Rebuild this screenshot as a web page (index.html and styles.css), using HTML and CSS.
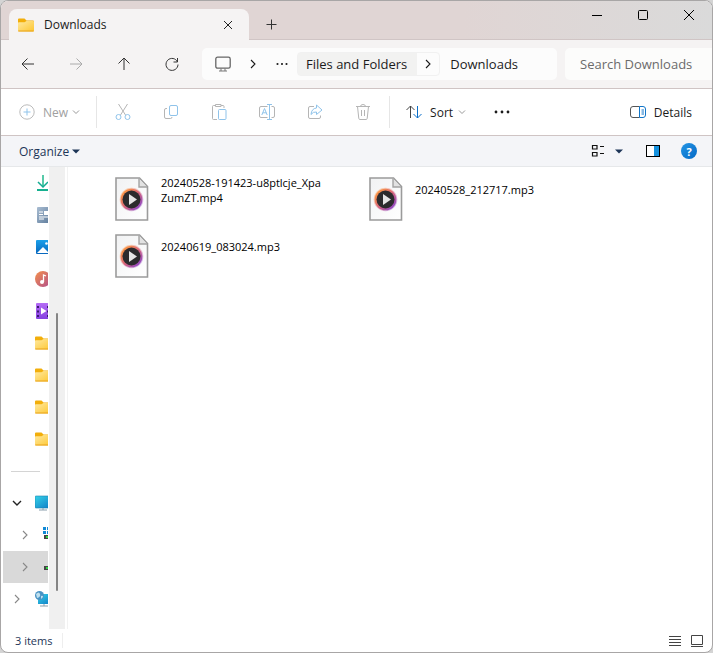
FILE: index.html
```html
<!DOCTYPE html>
<html lang="en">
<head>
    <meta charset="UTF-8">
    <meta name="viewport" content="width=device-width, initial-scale=1.0">
    <title>Downloads</title>
    <link rel="stylesheet" href="styles.css">
</head>
<body>
    <svg class="defs" aria-hidden="true">
        <defs>
            <linearGradient id="folderFill" x1="0" y1="0" x2="1" y2="1">
                <stop offset="0" stop-color="#ffe9a0"/>
                <stop offset="1" stop-color="#fdc62f"/>
            </linearGradient>
            <linearGradient id="screenFill" x1="0" y1="0" x2="1" y2="1">
                <stop offset="0" stop-color="#35d3e8"/>
                <stop offset="1" stop-color="#0f78c4"/>
            </linearGradient>
            <linearGradient id="ringFill" x1="0" y1="0" x2="1" y2="1">
                <stop offset="0.1" stop-color="#ff9a3c"/>
                <stop offset="0.5" stop-color="#d9657a"/>
                <stop offset="0.9" stop-color="#8a45c8"/>
            </linearGradient>
            <linearGradient id="sheetFill" x1="0" y1="0" x2="1" y2="1">
                <stop offset="0" stop-color="#f1f2f3"/>
                <stop offset="1" stop-color="#ffffff"/>
            </linearGradient>
            <linearGradient id="docFill" x1="0" y1="0" x2="1" y2="1">
                <stop offset="0" stop-color="#a9bdd2"/>
                <stop offset="1" stop-color="#5f7c9c"/>
            </linearGradient>
            <linearGradient id="picFill" x1="0" y1="0" x2="0" y2="1">
                <stop offset="0" stop-color="#1ba0ea"/>
                <stop offset="1" stop-color="#0666bd"/>
            </linearGradient>
            <linearGradient id="musicFill" x1="0" y1="0" x2="1" y2="1">
                <stop offset="0.1" stop-color="#ee8a52"/>
                <stop offset="1" stop-color="#b04d8d"/>
            </linearGradient>
            <linearGradient id="videoFill" x1="0" y1="0" x2="0" y2="1">
                <stop offset="0" stop-color="#b56cf5"/>
                <stop offset="1" stop-color="#8540e0"/>
            </linearGradient>
        </defs>
        <symbol id="folder" viewBox="0 0 16 14">
            <path d="M0 1.5Q0 .5 1 .5H6.500L8.500 2.500H15Q16 2.500 16 3.500V8H0Z" fill="#f2ae0a"/>
            <path d="M0 5Q0 4.300 .8 4.300H6.500L8.500 3H15.200Q16 3 16 3.800V12.500Q16 13.500 15 13.500H1Q0 13.500 0 12.500Z" fill="url(#folderFill)"/>
            <path d="M.3 13H15.700" stroke="#e8a21c"/>
        </symbol>
        <symbol id="media" viewBox="0 0 34 44">
            <path d="M1 1H24.500L32.500 9.500V43H1Z" fill="url(#sheetFill)" stroke="#9b9b9b" stroke-width="1.600"/>
            <path d="M24 1.500V10H32" fill="#e2e2e2" stroke="#a3a3a3" stroke-width="1.400"/>
            <circle cx="16.500" cy="22.500" r="11.800" fill="url(#ringFill)" opacity=".4"/>
            <circle cx="16.500" cy="22.500" r="10.800" fill="url(#ringFill)"/>
            <circle cx="16.500" cy="22.500" r="9" fill="#2c2b2d"/>
            <path d="M14 17L22 22.500L14 28Z" fill="#e6e6e6"/>
        </symbol>
        <symbol id="down" viewBox="0 0 8 8">
            <path d="M1 2.500L4 5.500L7 2.500" fill="none" stroke="currentColor"/>
        </symbol>
        <symbol id="right" viewBox="0 0 10 10">
            <path d="M3 1L7 5L3 9" fill="none" stroke="currentColor" stroke-width="1.100"/>
        </symbol>
        <symbol id="dots" viewBox="0 0 16 4">
            <circle cx="2" cy="2" r="1.400" fill="currentColor"/>
            <circle cx="8" cy="2" r="1.400" fill="currentColor"/>
            <circle cx="14" cy="2" r="1.400" fill="currentColor"/>
        </symbol>
    </svg>

    <div class="window">
        <header class="titlebar">
            <div class="tab">
                <svg class="icon16" aria-hidden="true"><use href="#folder"/></svg>
                <span class="tab-title">Downloads</span>
                <button class="tab-close" aria-label="Close tab">
                    <svg width="10" height="10" viewBox="0 0 10 10"><path d="M1 1L9 9M9 1L1 9" stroke="#222"/></svg>
                </button>
            </div>
            <button class="new-tab" aria-label="New tab">
                <svg width="12" height="12" viewBox="0 0 12 12"><path d="M5.500 .5V10.500M.5 5.500H10.500" stroke="#333"/></svg>
            </button>
            <div class="caption">
                <button aria-label="Minimize"><svg width="12" height="12" viewBox="0 0 12 12"><path d="M1 6.500H11" stroke="#000"/></svg></button>
                <button aria-label="Maximize"><svg width="12" height="12" viewBox="0 0 12 12"><rect x="1.500" y="1.500" width="9" height="9" rx="1" fill="none" stroke="#000"/></svg></button>
                <button aria-label="Close"><svg width="12" height="12" viewBox="0 0 12 12"><path d="M1 1L11 11M11 1L1 11" stroke="#000"/></svg></button>
            </div>
        </header>

        <nav class="navbar">
            <div class="nav-buttons">
                <button aria-label="Back"><svg width="14" height="14" viewBox="0 0 14 14"><path d="M13 7H1.500M6.500 1.500L1 7L6.500 12.500" /></svg></button>
                <button aria-label="Forward" disabled><svg width="14" height="14" viewBox="0 0 14 14"><path d="M1 7H12.500M7.500 1.500L13 7L7.500 12.500" /></svg></button>
                <button aria-label="Up"><svg width="14" height="14" viewBox="0 0 14 14"><path d="M7 13V1.500M1.500 6.500L7 1L12.500 6.500" /></svg></button>
                <button aria-label="Refresh"><svg width="14" height="14" viewBox="0 0 14 14"><path d="M12.500 5A6 6 0 1 0 13 7.500M12.500 1V5H8.500" /></svg></button>
            </div>
            <div class="address">
                <button class="root" aria-label="This PC">
                    <svg width="16" height="16" viewBox="0 0 16 16"><rect x=".8" y="1.200" width="14.400" height="11" rx="1.800" fill="none" stroke="#666" stroke-width="1.300"/><path d="M6 12.500V15M10 12.500V15M4 15H12" stroke="#777"/></svg>
                </button>
                <svg class="sep" aria-hidden="true"><use href="#right"/></svg>
                <button class="more" aria-label="More locations"><svg width="12" height="4"><use href="#dots"/></svg></button>
                <div class="crumb-split">
                    <button class="crumb">Files and Folders</button>
                    <button class="crumb-menu" aria-label="Subfolders"><svg class="sep"><use href="#right"/></svg></button>
                </div>
                <button class="crumb-current">Downloads</button>
            </div>
            <input class="search" type="text" placeholder="Search Downloads" aria-label="Search Downloads">
        </nav>

        <div class="commands">
            <button class="new" disabled>
                <svg width="16" height="16" viewBox="0 0 16 16"><circle cx="8" cy="8" r="7.200" stroke="#bbb"/><path d="M8 4.500V11.500M4.500 8H11.500" stroke="#8fc3ea"/></svg>
                <span>New</span>
                <svg class="caret"><use href="#down"/></svg>
            </button>
            <div class="command-group">
                <button aria-label="Cut" disabled><svg width="18" height="18" viewBox="0 0 18 18"><path d="M4.500 1L11.500 12M13.500 1L6.500 12" stroke="#b5b5b5"/><circle cx="4.500" cy="14" r="2.500" stroke="#8fc3ea"/><circle cx="13.500" cy="14" r="2.500" stroke="#8fc3ea"/></svg></button>
                <button aria-label="Copy" disabled><svg width="18" height="18" viewBox="0 0 18 18"><path d="M5 5.500H4Q2.500 5.500 2.500 7V14Q2.500 15.500 4 15.500H8.500Q10 15.500 10 14" stroke="#b5b5b5"/><rect x="7.500" y="2.500" width="8" height="10" rx="1.500" stroke="#8fc3ea"/></svg></button>
                <button aria-label="Paste" disabled><svg width="18" height="18" viewBox="0 0 18 18"><path d="M7 16.500H3.500Q2.500 16.500 2.500 15.500V3.500Q2.500 2.500 3.500 2.500H5.500M11 2.500H13Q14 2.500 14 3.500V5M5.500 1.500H11V3.500H5.500Z" stroke="#b5b5b5"/><rect x="8.500" y="6.500" width="7.500" height="10" rx="1" stroke="#8fc3ea"/></svg></button>
                <button aria-label="Rename" disabled><svg width="18" height="18" viewBox="0 0 18 18"><path d="M9.500 3.500H3Q1.500 3.500 1.500 5V13Q1.500 14.500 3 14.500H9.500M13.500 3.500H15Q16.500 3.500 16.500 5V13Q16.500 14.500 15 14.500H13.500" stroke="#b5b5b5"/><path d="M9 1.500H14M11.500 1.500V16.500M9 16.500H14M3.800 12L6.500 5.500L9.200 12M4.800 9.800H8.200" stroke="#8fc3ea"/></svg></button>
                <button aria-label="Share" disabled><svg width="18" height="18" viewBox="0 0 18 18"><path d="M8 3.500H4Q2.500 3.500 2.500 5V14Q2.500 15.500 4 15.500H13Q14.500 15.500 14.500 14V12.500" stroke="#b5b5b5"/><path d="M10.500 2L16 7L10.500 11.500V9Q7 8.500 5 11.500Q5.500 5.500 10.500 5Z" stroke="#8fc3ea" stroke-linejoin="round"/></svg></button>
                <button aria-label="Delete" disabled><svg width="18" height="18" viewBox="0 0 18 18"><path d="M2 3.500H16M6.500 3.500Q6.500 1.500 9 1.500Q11.500 1.500 11.500 3.500M3.500 3.500L4.800 15.500Q5 16.500 6 16.500H12Q13 16.500 13.200 15.500L14.500 3.500M7.500 7V13M10.500 7V13" stroke="#b5b5b5"/></svg></button>
            </div>
            <button class="sort">
                <svg width="16" height="16" viewBox="0 0 16 16"><path d="M4.500 14V2M.5 6L4.500 2L8.500 6" stroke="#444"/><path d="M11.500 2V14M7.500 10L11.500 14L15.500 10" stroke="#0a6fc9"/></svg>
                <span>Sort</span>
                <svg class="caret"><use href="#down"/></svg>
            </button>
            <button class="overflow" aria-label="See more"><svg width="16" height="4"><use href="#dots"/></svg></button>
            <button class="details">
                <svg width="16" height="14" viewBox="0 0 16 14"><path d="M9.500 1.500H3Q.5 1.500 .5 4V10Q.5 12.500 3 12.500H9.500" stroke="#555"/><path d="M9.500 1.500H13Q15.500 1.500 15.500 4V10Q15.500 12.500 13 12.500H9.500ZM11.500 5H14M11.500 7H14M11.500 9H14" stroke="#1075c8"/></svg>
                <span>Details</span>
            </button>
        </div>

        <div class="organize-bar">
            <button class="organize">Organize <svg width="8" height="5" viewBox="0 0 8 5"><path d="M0 .5H8L4 4.500Z" fill="#1d3557"/></svg></button>
            <div class="view-tools">
                <button aria-label="Change view"><svg width="14" height="14" viewBox="0 0 14 14"><path d="M1.500 1.500H6V5H1.500ZM1.500 8.500H6V12H1.500ZM9 2.500H13M9 9.500H13" fill="none" stroke="#111" stroke-width="1.200"/></svg></button>
                <button class="view-menu" aria-label="View options"><svg width="8" height="5" viewBox="0 0 8 5"><path d="M0 .5H8L4 4.500Z" fill="#1d3557"/></svg></button>
                <button class="preview" aria-label="Preview pane"><svg width="14" height="12" viewBox="0 0 14 12"><rect x=".5" y=".5" width="13" height="11" fill="#fff"/><rect x="8" y="1" width="5" height="10" fill="#1592df"/><rect x=".5" y=".5" width="13" height="11" fill="none" stroke="#000"/></svg></button>
                <button class="help" aria-label="Help">?</button>
            </div>
        </div>

        <main class="content">
            <aside class="sidebar">
                <ul class="tree">
                    <li><svg class="glyph" viewBox="0 0 16 16"><path d="M8 0V12" stroke="#20b98c" stroke-width="1.500"/><path d="M3 7L8 12L13 7" fill="none" stroke="#12ab92" stroke-width="1.500"/><path d="M2 15H14" stroke="#16b08f" stroke-width="2"/></svg></li>
                    <li><svg class="glyph" viewBox="0 0 16 16"><rect x="2" width="13" height="16" rx="1" fill="url(#docFill)"/><path d="M4 5H8M4 7.500H8M4 10H13M4 12H9" stroke="#fff"/><rect x="9" y="4" width="4" height="4" fill="#fff"/></svg></li>
                    <li><svg class="glyph" viewBox="0 0 16 16"><rect x="1" y="1" width="15" height="14" rx="1" fill="url(#picFill)"/><path d="M2 14L8 8L14 14Z" fill="#fff"/><circle cx="11.500" cy="4.500" r="1.300" fill="#fff"/></svg></li>
                    <li><svg class="glyph" viewBox="0 0 16 16"><circle cx="8" cy="8" r="8" fill="url(#musicFill)"/><circle cx="7" cy="11" r="2" fill="#fff"/><path d="M8.500 11V4L11 5" fill="none" stroke="#fff" stroke-width="1.300"/></svg></li>
                    <li><svg class="glyph" viewBox="0 0 16 16"><rect x="1" width="15" height="16" rx="1" fill="url(#videoFill)"/><path d="M3 3V14M13 3V14" stroke="#3b1a70" stroke-width="2" stroke-dasharray="2 2.500"/><path d="M6 4.500L11.500 8L6 11.500Z" fill="#fff"/></svg></li>
                    <li><svg class="glyph"><use href="#folder"/></svg></li>
                    <li><svg class="glyph"><use href="#folder"/></svg></li>
                    <li><svg class="glyph"><use href="#folder"/></svg></li>
                    <li><svg class="glyph"><use href="#folder"/></svg></li>
                    <li class="divider"><hr></li>
                    <li class="branch open">
                        <svg class="arrow" viewBox="0 0 10 10"><path d="M1 3L5 7L9 3" fill="none" stroke="#222" stroke-width="1.400"/></svg>
                        <svg class="glyph" viewBox="0 0 16 16"><rect y="1" width="17" height="12" rx="1" fill="url(#screenFill)" stroke="#1b7fae" stroke-width=".6"/><path d="M4 15H12M8 13V15" stroke="#8ba0ad"/></svg>
                    </li>
                    <li class="branch child">
                        <svg class="arrow"><use href="#right"/></svg>
                        <svg class="glyph" viewBox="0 0 16 16"><path d="M0 0H3V3H0ZM4 0H7V3H4ZM0 4H3V7H0ZM4 4H7V7H4Z" fill="#1189d6"/><rect x="1" y="8" width="14" height="4" fill="#444"/><rect x="3" y="9" width="2" height="2" fill="#31d843"/></svg>
                    </li>
                    <li class="branch child selected">
                        <svg class="arrow"><use href="#right"/></svg>
                        <svg class="glyph" viewBox="0 0 16 16"><rect x="1" y="7" width="14" height="4" fill="#444"/><rect x="3" y="8" width="2" height="2" fill="#31d843"/></svg>
                    </li>
                    <li class="branch">
                        <svg class="arrow"><use href="#right"/></svg>
                        <svg class="glyph" viewBox="0 0 16 16"><rect x="3" y="3" width="14" height="10" fill="url(#screenFill)"/><path d="M5 15H13M9 13V15" stroke="#8ba0ad"/><circle cx="4.500" cy="4.500" r="4.500" fill="#4a93c4"/><path d="M1 3Q4 0 5 3T2 7ZM6 5Q8 4 8 6L6 8Z" fill="#bfe0ef"/></svg>
                    </li>
                </ul>
                <div class="scrollbar"><div class="thumb"></div></div>
            </aside>

            <ul class="files">
                <li><svg class="file-icon" aria-hidden="true"><use href="#media"/></svg><span>20240528-191423-u8ptlcje_Xpa<wbr>ZumZT.mp4</span></li>
                <li><svg class="file-icon" aria-hidden="true"><use href="#media"/></svg><span>20240528_212717.mp3</span></li>
                <li><svg class="file-icon" aria-hidden="true"><use href="#media"/></svg><span>20240619_083024.mp3</span></li>
            </ul>
        </main>

        <footer class="statusbar">
            <span class="count">3 items</span>
            <div class="layouts">
                <button aria-label="Details view"><svg width="12" height="12" viewBox="0 0 12 12"><path d="M0 1.500H12M0 4.500H12M0 7.500H12M0 10.500H12" stroke="#444"/></svg></button>
                <button aria-label="Large icons view"><svg width="12" height="12" viewBox="0 0 12 12"><path d="M.5 .5H11.500V9.500H.5ZM0 11.500H12" fill="none" stroke="#444"/></svg></button>
            </div>
        </footer>
    </div>
</body>
</html>
```

FILE: styles.css
```css
* {
    box-sizing: border-box;
}
body {
    margin: 0;
    background: #d4d4d4;
    color: #1b1b1b;
    font-family: "Open Sans", "Noto Sans", sans-serif;
    font-size: 12px;
}
button {
    display: flex;
    align-items: center;
    justify-content: center;
    padding: 0;
    border: 0;
    background: none;
    color: inherit;
    font: inherit;
    white-space: nowrap;
}
ul {
    list-style: none;
    margin: 0;
    padding: 0;
}
svg {
    flex: none;
}
.defs {
    position: absolute;
    width: 0;
    height: 0;
}
.window {
    display: flex;
    flex-direction: column;
    height: 100vh;
    border: 1px solid #a8a6a6;
    border-radius: 8px;
    background: #fff;
    overflow: hidden;
}

/* title bar */
.titlebar {
    display: flex;
    height: 39px;
    padding-left: 8px;
    background: linear-gradient(90deg, #e0d5d4 65%, #dadada);
    box-shadow: inset 0 -1px #d0c5c5;
}
.tab {
    display: flex;
    align-items: center;
    width: 240px;
    margin-top: 8px;
    padding: 0 11px 0 9px;
    border-radius: 8px 8px 0 0;
    background: #f5f3f3;
}
.icon16 {
    width: 16px;
    height: 14px;
}
.tab-title {
    flex: 1;
    padding-left: 10px;
    font-weight: 500;
}
.tab-close {
    width: 20px;
    height: 20px;
}
.new-tab {
    width: 46px;
    padding-top: 8px;
}
.caption {
    display: flex;
    margin-left: auto;
    height: 28px;
}
.caption button {
    width: 46px;
}

/* navigation */
.navbar {
    display: flex;
    align-items: center;
    height: 49px;
    padding-left: 3px;
    border-bottom: 1px solid #cfc4c4;
    background: #f5f3f3;
    font-size: 13px;
}
.nav-buttons {
    display: flex;
    margin-right: 6px;
}
.nav-buttons button {
    width: 48px;
    height: 32px;
}
.nav-buttons path {
    fill: none;
    stroke: #333;
}
.nav-buttons button:disabled path {
    stroke: #aaa;
}
.address {
    display: flex;
    flex: 1;
    align-items: center;
    height: 32px;
    margin-right: 8px;
    border-radius: 5px;
    background: #fcfcfc;
}
.root {
    width: 42px;
}
.sep {
    width: 10px;
    height: 10px;
    margin: 0 4px;
}
.more {
    width: 40px;
}
.crumb-split {
    display: flex;
    height: 24px;
    margin-left: -5px;
    border: 1px solid #f1f1f1;
    border-radius: 4px;
}
.crumb {
    padding: 0 10px 0 8px;
    background: #f2f2f1;
}
.crumb-menu {
    width: 22px;
}
.crumb-current {
    margin-left: 10px;
}
.search {
    width: 147px;
    height: 32px;
    padding: 0 0 0 15px;
    border: 0;
    border-radius: 5px 0 0 5px;
    background: #fcfcfb;
    font: inherit;
}
.search::placeholder {
    color: #6b6b6b;
}

/* command bar */
.commands {
    display: flex;
    align-items: center;
    height: 47px;
    padding: 0 20px 0 18px;
    border-bottom: 1px solid #cfc4c4;
}
.commands svg {
    fill: none;
}
.caret {
    width: 8px;
    height: 8px;
    color: #999;
}
.new {
    gap: 8px;
    height: 32px;
    padding-right: 12px;
    border-right: 1px solid #e6e6e6;
    color: #a0a0a0;
}
.new .caret {
    margin-left: -4px;
}
.command-group {
    display: flex;
    height: 32px;
    padding: 0 2px;
    border-right: 1px solid #e6e6e6;
}
.new {
    padding-right: 16px;
}
.command-group button {
    width: 48px;
}
.sort {
    gap: 8px;
    margin-left: 16px;
}
.sort .caret {
    margin-left: -3px;
}
.overflow {
    margin-left: 28px;
}
.details {
    gap: 8px;
    margin-left: auto;
}

/* organize bar */
.organize-bar {
    display: flex;
    align-items: center;
    justify-content: space-between;
    height: 31px;
    padding: 0 15px 0 18px;
    border-bottom: 1px solid #e6e8ea;
    background: #f4f5f8;
}
.organize {
    gap: 3px;
    color: #1d3557;
}
.view-tools {
    display: flex;
    align-items: center;
}
.view-menu {
    margin: 0 23px 0 10px;
}
.preview {
    margin-right: 21px;
}
.help {
    width: 16px;
    height: 16px;
    border-radius: 50%;
    background: linear-gradient(135deg, #2496e6, #0468c4);
    color: #fff;
    font-size: 11px;
    font-weight: 700;
}

/* folder tree and files */
.content {
    display: flex;
    flex: 1;
    min-height: 0;
}
.sidebar {
    display: flex;
    width: 67px;
    padding-right: 2px;
    border-right: 1px solid #f2f2f2;
}
.tree {
    width: 47px;
    margin-right: 1px;
    overflow: hidden;
}
.tree li {
    display: flex;
    align-items: center;
    height: 32px;
    padding-left: 34px;
}
.glyph {
    width: 16px;
    height: 16px;
}
.arrow {
    width: 10px;
    height: 10px;
    margin-right: 13px;
    color: #888;
}
.tree .divider {
    padding: 0 8px 0 10px;
}
.divider hr {
    width: 100%;
    margin: 0;
    border: 0;
    border-top: 1px solid #d4d4d4;
}
.tree .branch {
    padding-left: 11px;
}
.tree .child {
    padding-left: 19px;
}
.tree .selected {
    margin-left: 2px;
    padding-left: 17px;
    background: #d9d9d9;
}
.scrollbar {
    flex: 1;
    padding: 146px 7px 38px;
    background: #f0f0f0;
}
.thumb {
    height: 100%;
    width: 2px;
    border-radius: 1px;
    background: #858585;
}
.files {
    display: grid;
    flex: 1;
    grid-template-columns: repeat(auto-fill, 254px);
    grid-auto-rows: 57px;
    padding: 3px 0 0 47px;
    color: #000;
    font-size: 11px;
    line-height: 15px;
}
.files li {
    display: flex;
    align-items: center;
}
.files span {
    width: 174px;
    margin-left: 12px;
    padding-bottom: 18px;
}
.file-icon {
    width: 34px;
    height: 44px;
}

/* status bar */
.statusbar {
    display: flex;
    align-items: center;
    justify-content: space-between;
    height: 23px;
    padding: 0 9px 0 14px;
    color: #1d3557;
    font-size: 11px;
}
.count {
    padding-right: 10px;
    border-right: 1px solid #eee;
}
.layouts {
    display: flex;
    gap: 10px;
}
```
